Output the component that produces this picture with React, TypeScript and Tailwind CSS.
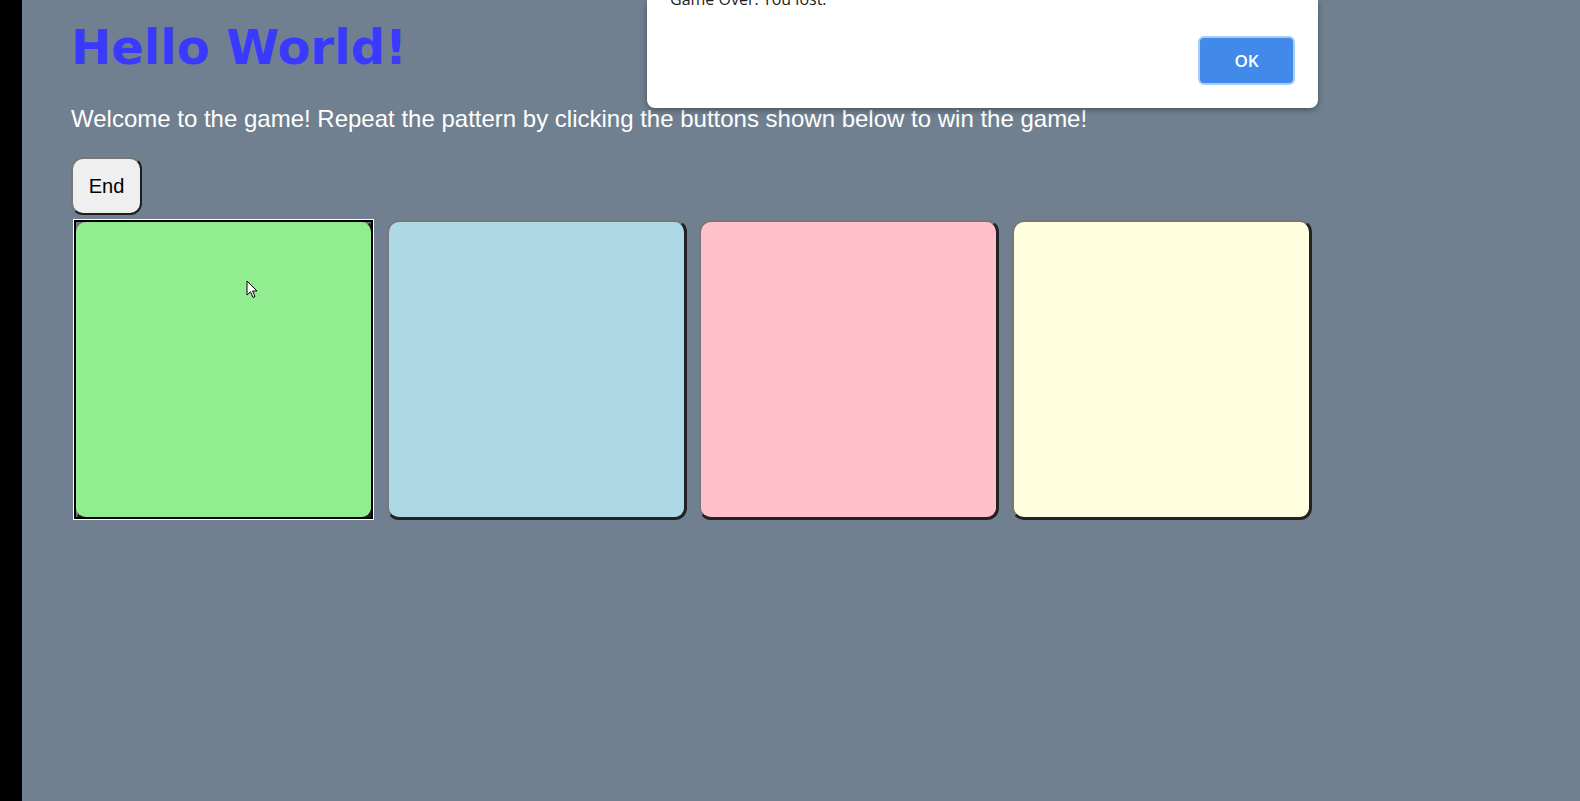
export default function App() {
    const pads = [
        { color: "bg-[#90ee90]", focused: true },
        { color: "bg-[#add8e6]", focused: false },
        { color: "bg-[#ffc0cb]", focused: false },
        { color: "bg-[#ffffe0]", focused: false },
    ]

    return (
        <div className="relative flex min-h-screen bg-black">
            <div className="w-[22px] shrink-0" />
            <main className="flex-1 bg-[#708090] pl-[49px] font-['Liberation_Sans',Arial,sans-serif]">
                <h1 className="mt-[19px] text-[48px] leading-[56px] font-bold text-[#3a3aff] font-['DejaVu_Sans',Verdana,sans-serif]">
                    Hello World!
                </h1>
                <p className="mt-[30px] text-[24px] leading-[27px] text-white">
                    Welcome to the game! Repeat the pattern by clicking the buttons shown below to win the game!
                </p>
                <button className="mt-[25px] h-[58px] w-[71px] rounded-[12px] border-2 border-t-[#777] border-l-[#777] border-r-[#1e1e1e] border-b-[#1e1e1e] bg-[#efefef] text-[20px] text-black">
                    End
                </button>
                <div className="mt-[5px] ml-[3px] flex gap-[12.5px]">
                    {pads.map((p, i) => (
                        <button
                            key={i}
                            className={`relative h-[300px] w-[300px] rounded-[12px] border-2 border-b-[3px] border-r-[3px] border-t-[#777] border-l-[#777] border-r-[#222] border-b-[#222] ${p.color}`}
                        >
                            {p.focused && (
                                <span className="absolute -inset-[2px] border-2 border-black outline-1 outline-white" />
                            )}
                        </button>
                    ))}
                </div>
            </main>

            {/* mouse pointer */}
            <svg className="absolute left-[246px] top-[280px]" width="13" height="19" viewBox="0 0 13 19">
                <path d="M1 1 L1 15 L4.5 11.8 L7 17.5 L9 16.6 L6.6 11 L11 11 Z" fill="white" stroke="black" strokeWidth="1" strokeLinejoin="round" />
            </svg>

            {/* alert dialog */}
            <div className="absolute left-[647px] top-0 h-[108px] w-[671px] overflow-hidden rounded-b-[8px] bg-white shadow-[0_2px_6px_rgba(0,0,0,0.35)] font-['Open_Sans',sans-serif]">
                <p className="ml-[23px] -mt-[11px] text-[16px] leading-[20px] text-[#202124]">Game Over. You lost.</p>
                <button className="absolute left-[551px] top-[36px] h-[49px] w-[97px] rounded-[6px] border-2 border-[#a9cdf6] bg-[#418aea] text-[17px] font-semibold text-white">
                    OK
                </button>
            </div>
        </div>
    )
}
